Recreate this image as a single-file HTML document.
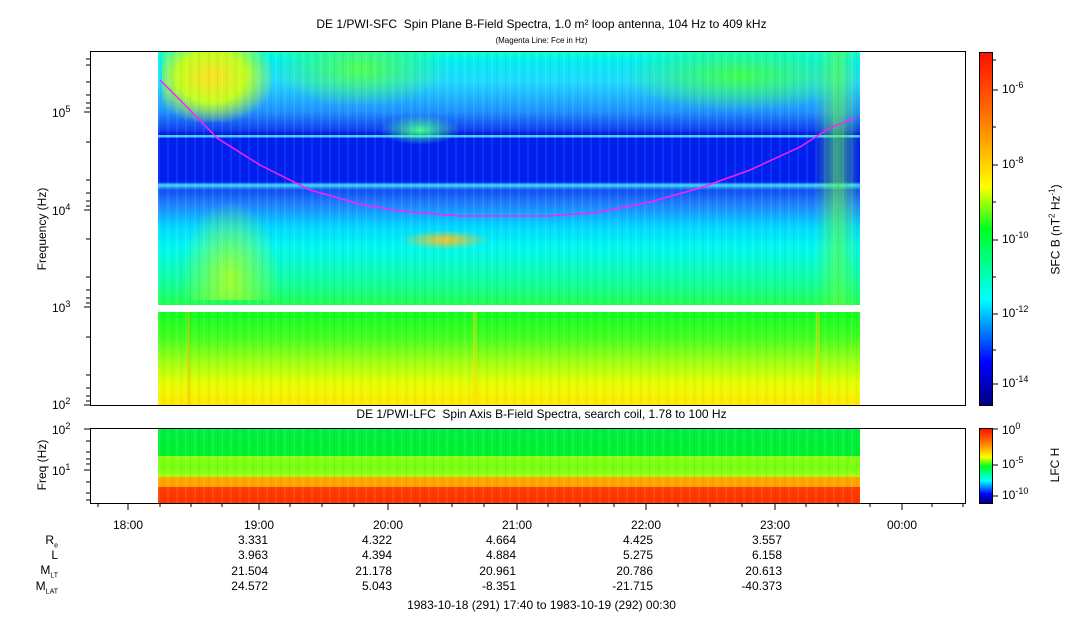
<!DOCTYPE html><html><head><style>
body{margin:0;width:1083px;height:620px;background:#fff;position:relative;overflow:hidden;font-family:"Liberation Sans",sans-serif;color:#000}
.a{position:absolute}
.t{position:absolute;font-size:12px;white-space:nowrap}
.r{text-align:right}
.nz{position:absolute;background:repeating-linear-gradient(90deg,rgba(255,255,255,.08) 0 2px,rgba(0,0,0,0) 2px 5px,rgba(0,0,0,.05) 5px 6px,rgba(0,0,0,0) 6px 9px)}
</style></head><body>
<div class="t" style="left:0;width:1083px;text-align:center;top:17px">DE 1/PWI-SFC&nbsp; Spin Plane B-Field Spectra, 1.0 m² loop antenna, 104 Hz to 409 kHz</div>
<div class="t" style="left:0;width:1083px;text-align:center;top:36px;font-size:8px">(Magenta Line: Fce in Hz)</div>
<div class="t" style="left:0;width:1083px;text-align:center;top:407px">DE 1/PWI-LFC&nbsp; Spin Axis B-Field Spectra, search coil, 1.78 to 100 Hz</div>

<div class="a" style="left:158px;top:52px;width:702px;height:253px;background:linear-gradient(#10ffd0 0px,#00f0f0 8px,#20d8ff 30px,#2090ff 60px,#1040f0 78px,#0010e0 83px,#40d0ff 83px,#40d0ff 85px,#0020f0 86px,#0020f0 130px,#40e0ff 133px,#1050f0 138px,#2080ff 152px,#00d8ff 175px,#00f8f0 195px,#10ffa0 230px,#20ff50 253px)"></div>
<div class="a" style="left:162px;top:52px;width:110px;height:70px;background:radial-gradient(ellipse at 45% 35%,#ffe020 0,#c0ff20 40%,rgba(0,255,200,0) 75%)"></div>
<div class="a" style="left:270px;top:52px;width:180px;height:55px;background:radial-gradient(ellipse at 50% 30%,#50ff50 0,rgba(0,255,200,0) 70%)"></div>
<div class="a" style="left:620px;top:52px;width:240px;height:60px;background:radial-gradient(ellipse at 50% 40%,#40ff50 0,rgba(0,255,200,0) 70%)"></div>
<div class="a" style="left:380px;top:115px;width:80px;height:30px;background:radial-gradient(ellipse,#40ff90 0,rgba(0,255,200,0) 70%)"></div>
<div class="a" style="left:180px;top:200px;width:100px;height:100px;background:radial-gradient(ellipse at 50% 80%,#a0ff30 0,rgba(0,255,100,0) 70%)"></div>
<div class="a" style="left:400px;top:230px;width:90px;height:20px;background:radial-gradient(ellipse,#ffc020 0,rgba(0,255,100,0) 70%)"></div>
<div class="a" style="left:815px;top:52px;width:45px;height:253px;background:linear-gradient(90deg,rgba(0,0,0,0),rgba(100,255,60,.6),rgba(0,0,0,0))"></div>
<div class="nz" style="left:158px;top:52px;width:702px;height:253px"></div>
<div class="a" style="left:158px;top:312px;width:702px;height:93px;background:linear-gradient(#10ff20 0,#40ff20 25px,#a0ff10 50px,#e8ff00 72px,#ffe800 93px)"></div>
<div class="a" style="left:187px;top:312px;width:3px;height:93px;background:#ffb000;opacity:.4"></div>
<div class="a" style="left:473px;top:312px;width:4px;height:93px;background:#ffd000;opacity:.4"></div>
<div class="a" style="left:816px;top:312px;width:4px;height:93px;background:#ffd000;opacity:.4"></div>
<div class="nz" style="left:158px;top:312px;width:702px;height:93px"></div>

<div class="a" style="left:158px;top:429px;width:702px;height:75px;background:linear-gradient(#00f040 0,#00f030 27px,#90ff10 27px,#70ff10 38px,#a8ff10 48px,#ffa800 48px,#ffa000 58px,#ff4000 58px,#ff3000 75px)"></div>
<div class="nz" style="left:158px;top:429px;width:702px;height:75px"></div>

<svg class="a" style="left:0;top:0" width="1083" height="620">
<polyline fill="none" stroke="#ff20ff" stroke-width="1.5" points="160,80 185,105 217,138 260,165 310,190 360,204 400,211 460,216 550,216 600,212 650,202 700,188 750,170 800,147 830,128 855,118"/>
<g stroke="#000" fill="none" stroke-width="1">
<rect x="90.5" y="51.5" width="875" height="354"/>
<rect x="90.5" y="428.5" width="875" height="75"/>
<rect x="979.5" y="52.5" width="13" height="353"/>
<rect x="979.5" y="428.5" width="13" height="75"/>
<path d="M84 112H90M84 210H90M84 307H90M84 405H90M86 82H90M86 95H90M86 103H90M86 108H90M86 142H90M86 180H90M86 193H90M86 201H90M86 206H90M86 239H90M86 277H90M86 290H90M86 298H90M86 303H90M86 337H90M86 375H90M86 388H90M86 396H90M86 401H90M86 65H90M86 59H90"/>
<path d="M84 429H90M84 470H90M86 441H90M86 452H90M86 459H90M86 464H90M86 482H90M86 493H90M86 500H90"/>
<path d="M128 504V510M259 504V510M388 504V510M517 504V510M646 504V510M775 504V510M902 504V510"/>
<path d="M98 504V507M160 504V507M191 504V507M222 504V507M290 504V507M322 504V507M354 504V507M420 504V507M452 504V507M484 504V507M548 504V507M580 504V507M614 504V507M678 504V507M710 504V507M742 504V507M806 504V507M838 504V507M870 504V507M932 504V507M963 504V507"/>
<path d="M993 90H998M993 165H998M993 240H998M993 314H998M993 384H998M993 127H996M993 202H996M993 277H996M993 350H996M993 60H996"/>
<path d="M993 429H998M993 465H998M993 496H998"/>
</g>
<defs><linearGradient id="cb" x1="0" y1="1" x2="0" y2="0"><stop offset="0" stop-color="#000080"/><stop offset=".12" stop-color="#0000ff"/><stop offset=".3" stop-color="#00ffff"/><stop offset=".5" stop-color="#00ff20"/><stop offset=".62" stop-color="#ffff00"/><stop offset=".8" stop-color="#ff8000"/><stop offset="1" stop-color="#ff1000"/></linearGradient></defs>
<rect x="980" y="53" width="12" height="352" fill="url(#cb)"/>
<rect x="980" y="429" width="12" height="74" fill="url(#cb)"/>
</svg>

<div class="t" style="left:52px;top:104px">10<sup style="font-size:9px">5</sup></div>
<div class="t" style="left:52px;top:202px">10<sup style="font-size:9px">4</sup></div>
<div class="t" style="left:52px;top:299px">10<sup style="font-size:9px">3</sup></div>
<div class="t" style="left:52px;top:396px">10<sup style="font-size:9px">2</sup></div>
<div class="t" style="left:52px;top:421px">10<sup style="font-size:9px">2</sup></div>
<div class="t" style="left:52px;top:462px">10<sup style="font-size:9px">1</sup></div>
<div class="t" style="left:-18px;top:222px;transform:rotate(-90deg);width:120px;text-align:center">Frequency (Hz)</div>
<div class="t" style="left:2px;top:458px;transform:rotate(-90deg);width:80px;text-align:center">Freq (Hz)</div>

<div class="t" style="left:1002px;top:80px">10<sup style="font-size:9px">-6</sup></div>
<div class="t" style="left:1002px;top:155px">10<sup style="font-size:9px">-8</sup></div>
<div class="t" style="left:1002px;top:230px">10<sup style="font-size:9px">-10</sup></div>
<div class="t" style="left:1002px;top:304px">10<sup style="font-size:9px">-12</sup></div>
<div class="t" style="left:1002px;top:374px">10<sup style="font-size:9px">-14</sup></div>
<div class="t" style="left:1002px;top:421px">10<sup style="font-size:9px">0</sup></div>
<div class="t" style="left:1002px;top:455px">10<sup style="font-size:9px">-5</sup></div>
<div class="t" style="left:1002px;top:486px">10<sup style="font-size:9px">-10</sup></div>
<div class="t" style="left:995px;top:222px;transform:rotate(-90deg);width:120px;text-align:center">SFC B (nT<sup style="font-size:8px">2</sup> Hz<sup style="font-size:8px">-1</sup>)</div>
<div class="t" style="left:1025px;top:458px;transform:rotate(-90deg);width:60px;text-align:center">LFC H</div>

<div class="t" style="left:108px;top:518px;width:40px;text-align:center">18:00</div>
<div class="t" style="left:239px;top:518px;width:40px;text-align:center">19:00</div>
<div class="t" style="left:368px;top:518px;width:40px;text-align:center">20:00</div>
<div class="t" style="left:497px;top:518px;width:40px;text-align:center">21:00</div>
<div class="t" style="left:626px;top:518px;width:40px;text-align:center">22:00</div>
<div class="t" style="left:755px;top:518px;width:40px;text-align:center">23:00</div>
<div class="t" style="left:882px;top:518px;width:40px;text-align:center">00:00</div>

<div class="t r" style="left:0;width:58px;top:533px">R<sub style="font-size:7px">e</sub></div>
<div class="t r" style="left:0;width:58px;top:548px">L</div>
<div class="t r" style="left:0;width:58px;top:563px">M<sub style="font-size:7px">LT</sub></div>
<div class="t r" style="left:0;width:58px;top:579px">M<sub style="font-size:7px">LAT</sub></div>

<div class="t r" style="left:200px;width:68px;top:533px;line-height:15.3px">3.331<br>3.963<br>21.504<br>24.572</div>
<div class="t r" style="left:324px;width:68px;top:533px;line-height:15.3px">4.322<br>4.394<br>21.178<br>5.043</div>
<div class="t r" style="left:448px;width:68px;top:533px;line-height:15.3px">4.664<br>4.884<br>20.961<br>-8.351</div>
<div class="t r" style="left:585px;width:68px;top:533px;line-height:15.3px">4.425<br>5.275<br>20.786<br>-21.715</div>
<div class="t r" style="left:714px;width:68px;top:533px;line-height:15.3px">3.557<br>6.158<br>20.613<br>-40.373</div>
<div class="t" style="left:0;width:1083px;text-align:center;top:598px">1983-10-18 (291) 17:40 to 1983-10-19 (292) 00:30</div>
</body></html>
